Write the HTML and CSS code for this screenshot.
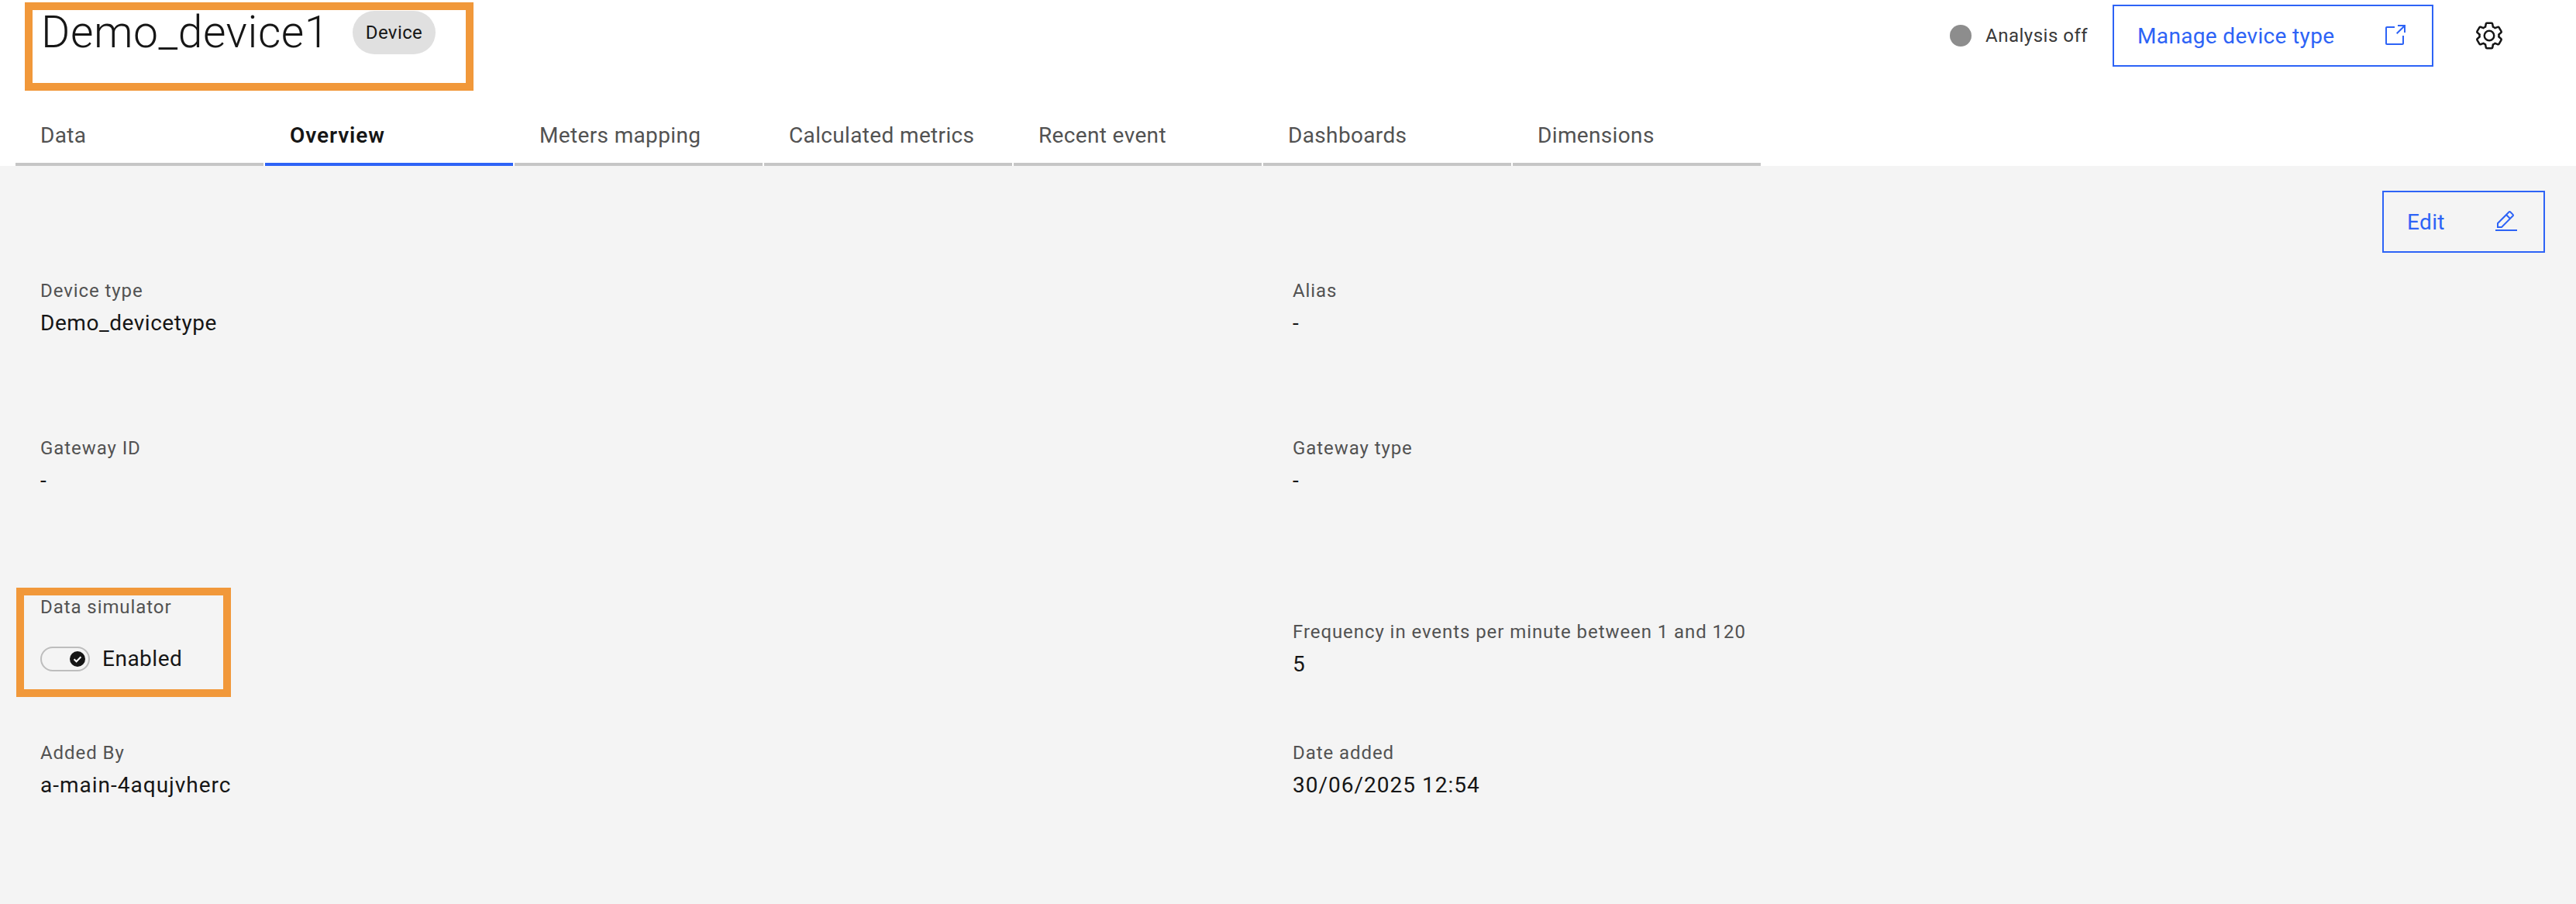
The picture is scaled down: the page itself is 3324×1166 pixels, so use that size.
FILE: index.html
```html
<!DOCTYPE html>
<html lang="en">
<head>
  <meta charset="UTF-8">
  <meta name="viewport" content="width=device-width, initial-scale=1">
  <title>Demo_device1</title>
  <link rel="stylesheet" href="styles.css">
</head>
<body>
  <header class="page-header">
    <div class="title-row">
      <div class="title-block">
        <h1 class="title">Demo_device1</h1>
        <span class="tag">Device</span>
      </div>
      <div class="actions">
        <span class="status-dot"></span>
        <span class="status-text">Analysis off</span>
        <a class="btn btn-manage" href="#">
          <span>Manage device type</span>
          <svg class="btn-icon" viewBox="0 0 16 16" fill="currentColor">
            <path d="M13,14H3c-0.6,0-1-0.4-1-1V3c0-0.6,0.4-1,1-1h5v1H3v10h10V8h1v5C14,13.6,13.6,14,13,14z"/>
            <polygon points="10,1 10,2 13.3,2 9,6.3 9.7,7 14,2.7 14,6 15,6 15,1"/>
          </svg>
        </a>
        <svg class="gear" viewBox="0 0 32 32" fill="currentColor">
          <path d="M27,16.76c0-.25,0-.5,0-.76s0-.51,0-.77l1.92-1.68A2,2,0,0,0,29.3,11L26.94,7a2,2,0,0,0-1.73-1,2,2,0,0,0-.64.1l-2.43.82a11.35,11.35,0,0,0-1.31-.75l-.51-2.52a2,2,0,0,0-2-1.61H13.64a2,2,0,0,0-2,1.61l-.51,2.52a11.48,11.48,0,0,0-1.32.75L7.43,6.06A2,2,0,0,0,6.79,6,2,2,0,0,0,5.06,7L2.7,11a2,2,0,0,0,.41,2.51L5,15.24c0,.25,0,.5,0,.76s0,.51,0,.77L3.11,18.45A2,2,0,0,0,2.7,21L5.06,25a2,2,0,0,0,1.73,1,2,2,0,0,0,.64-.1l2.43-.82a11.35,11.35,0,0,0,1.31.75l.51,2.52a2,2,0,0,0,2,1.61h4.72a2,2,0,0,0,2-1.61l.51-2.52a11.48,11.48,0,0,0,1.32-.75l2.42.82a2,2,0,0,0,.64.1,2,2,0,0,0,1.73-1L29.3,21a2,2,0,0,0-.41-2.51ZM25.21,24l-3.43-1.16a8.86,8.86,0,0,1-2.71,1.57L18.36,28H13.64l-.71-3.55a9.36,9.36,0,0,1-2.7-1.57L6.79,24,4.43,20l2.72-2.4a8.9,8.9,0,0,1,0-3.13L4.43,12,6.79,8l3.43,1.16a8.86,8.86,0,0,1,2.71-1.57L13.64,4h4.72l.71,3.55a9.36,9.36,0,0,1,2.7,1.57L25.21,8,27.57,12l-2.72,2.4a8.9,8.9,0,0,1,0,3.13L27.57,20Z"/>
          <path d="M16,22a6,6,0,1,1,6-6A5.94,5.94,0,0,1,16,22Zm0-10a3.91,3.91,0,0,0-4,4,3.91,3.91,0,0,0,4,4,3.91,3.91,0,0,0,4-4A3.91,3.91,0,0,0,16,12Z"/>
        </svg>
      </div>
    </div>
    <nav class="tabs">
      <a class="tab" href="#">Data</a>
      <a class="tab tab-active" href="#">Overview</a>
      <a class="tab" href="#">Meters mapping</a>
      <a class="tab" href="#">Calculated metrics</a>
      <a class="tab" href="#">Recent event</a>
      <a class="tab" href="#">Dashboards</a>
      <a class="tab" href="#">Dimensions</a>
    </nav>
  </header>

  <main class="content">
    <div class="toolbar">
      <a class="btn btn-edit" href="#">
        <span>Edit</span>
        <svg class="btn-icon" viewBox="0 0 32 32" fill="currentColor">
          <rect x="2" y="26" width="28" height="2"/>
          <path d="M25.4,9c0.8-0.8,0.8-2,0-2.8c0,0,0,0,0,0l-3.6-3.6c-0.8-0.8-2-0.8-2.8,0c0,0,0,0,0,0l-15,15V24h6.4L25.4,9z M20.4,4L24,7.6l-3,3L17.4,7L20.4,4z M6,22v-3.6l10-10l3.6,3.6l-10,10H6z"/>
        </svg>
      </a>
    </div>
    <div class="fields">
      <div class="field">
        <div class="label">Device type</div>
        <div class="value">Demo_devicetype</div>
      </div>
      <div class="field">
        <div class="label">Alias</div>
        <div class="value">-</div>
      </div>
      <div class="field">
        <div class="label">Gateway ID</div>
        <div class="value">-</div>
      </div>
      <div class="field">
        <div class="label">Gateway type</div>
        <div class="value">-</div>
      </div>
      <div class="field">
        <div class="label">Data simulator</div>
        <div class="toggle-row">
          <span class="toggle">
            <svg class="toggle-knob" viewBox="0 0 20 20">
              <circle cx="10" cy="10" r="10" fill="#161616"/>
              <path d="M5.6 10.2l3 3 5.8-6" fill="none" stroke="#fff" stroke-width="2"/>
            </svg>
          </span>
          <span class="toggle-text">Enabled</span>
        </div>
      </div>
      <div class="field field-low">
        <div class="label">Frequency in events per minute between 1 and 120</div>
        <div class="value">5</div>
      </div>
      <div class="field">
        <div class="label">Added By</div>
        <div class="value value-wide">a-main-4aqujvherc</div>
      </div>
      <div class="field">
        <div class="label">Date added</div>
        <div class="value value-wide">30/06/2025 12:54</div>
      </div>
    </div>
  </main>

  <!-- annotation boxes drawn on top of the screenshot -->
  <div class="callout callout-title"></div>
  <div class="callout callout-sim"></div>
</body>
</html>
```

FILE: styles.css
```css
:root {
  --blue: #2d63f6;
  --text: #161616;
  --text-soft: #525252;
  --line: #c6c6c6;
  --bg: #f4f4f4;
  --orange: #f1983a;
}
* {
  box-sizing: border-box;
  margin: 0;
  padding: 0;
}
body {
  position: relative;
  width: 3324px;
  height: 1166px;
  overflow: hidden;
  background: var(--bg);
  color: var(--text);
  font-family: Roboto, "Liberation Sans", sans-serif;
}
a {
  text-decoration: none;
  color: inherit;
}

/* header */
.page-header {
  height: 214px;
  background: #fff;
  padding-left: 20px;
}
.title-row {
  display: flex;
  justify-content: space-between;
  height: 128px;
}
.title-block {
  display: flex;
  align-items: flex-start;
  padding-left: 33px;
  padding-top: 14px;
}
.title {
  font-size: 57px;
  font-weight: 300;
  line-height: 56px;
  width: 402px;
  letter-spacing: 0.55px;
  white-space: nowrap;
}
.tag {
  display: flex;
  justify-content: center;
  align-items: center;
  width: 107px;
  height: 56px;
  background: #e0e0e0;
  border-radius: 28px;
  font-size: 24px;
  letter-spacing: 0.4px;
}
.actions {
  display: flex;
  align-items: flex-start;
  padding-top: 6px;
  padding-right: 92px;
}
.status-dot {
  width: 28px;
  height: 28px;
  margin-top: 26px;
  margin-right: 18px;
  border-radius: 50%;
  background: #8d8d8d;
}
.status-text {
  width: 164px;
  font-size: 24px;
  line-height: 80px;
  color: #393939;
  letter-spacing: 0.5px;
}
.btn {
  display: flex;
  justify-content: space-between;
  align-items: center;
  height: 80px;
  padding: 0 32px 0 30px;
  border: 2px solid var(--blue);
  color: var(--blue);
  font-size: 28px;
  letter-spacing: 0.35px;
}
.btn-manage { width: 414px; }
.btn-edit { width: 210px; }
.btn-icon {
  width: 32px;
  height: 32px;
}
.gear {
  width: 40px;
  height: 40px;
  margin-top: 20px;
  margin-left: 52px;
}

/* tabs */
.tabs {
  display: flex;
  gap: 2px;
}
.tab {
  width: 320px;
  height: 86px;
  padding: 28px 0 0 32px;
  border-bottom: 4px solid var(--line);
  color: var(--text-soft);
  font-size: 28px;
  line-height: 38px;
  letter-spacing: 0.35px;
}
.tab-active {
  border-bottom-color: var(--blue);
  color: var(--text);
  font-weight: 600;
  letter-spacing: 0.9px;
}

/* overview */
.toolbar {
  display: flex;
  justify-content: flex-end;
  padding: 32px 40px 0 0;
}
.fields {
  display: grid;
  grid-template-columns: 1616px 1fr;
  grid-template-rows: 203px 205px 188px auto;
  margin-top: 33px;
  padding-left: 52px;
}
.field-low { margin-top: 32px; }
.label {
  font-size: 24px;
  line-height: 32px;
  color: var(--text-soft);
  letter-spacing: 0.93px;
}
.value {
  margin-top: 6px;
  font-size: 28px;
  line-height: 40px;
  letter-spacing: 0.55px;
}
.value-wide { letter-spacing: 1px; }
.toggle-row {
  display: flex;
  align-items: center;
  gap: 16px;
  margin-top: 35px;
}
.toggle {
  display: flex;
  justify-content: flex-end;
  align-items: center;
  width: 64px;
  height: 32px;
  padding-right: 4px;
  border: 2px solid #bdbdbd;
  border-radius: 16px;
}
.toggle-knob {
  width: 20px;
  height: 20px;
}
.toggle-text {
  font-size: 28px;
  line-height: 32px;
  letter-spacing: 0.5px;
}

/* orange annotation boxes */
.callout {
  position: absolute;
  border: 10px solid var(--orange);
}
.callout-title {
  left: 32px;
  top: 3px;
  width: 579px;
  height: 114px;
}
.callout-sim {
  left: 21px;
  top: 758px;
  width: 277px;
  height: 141px;
}
```
